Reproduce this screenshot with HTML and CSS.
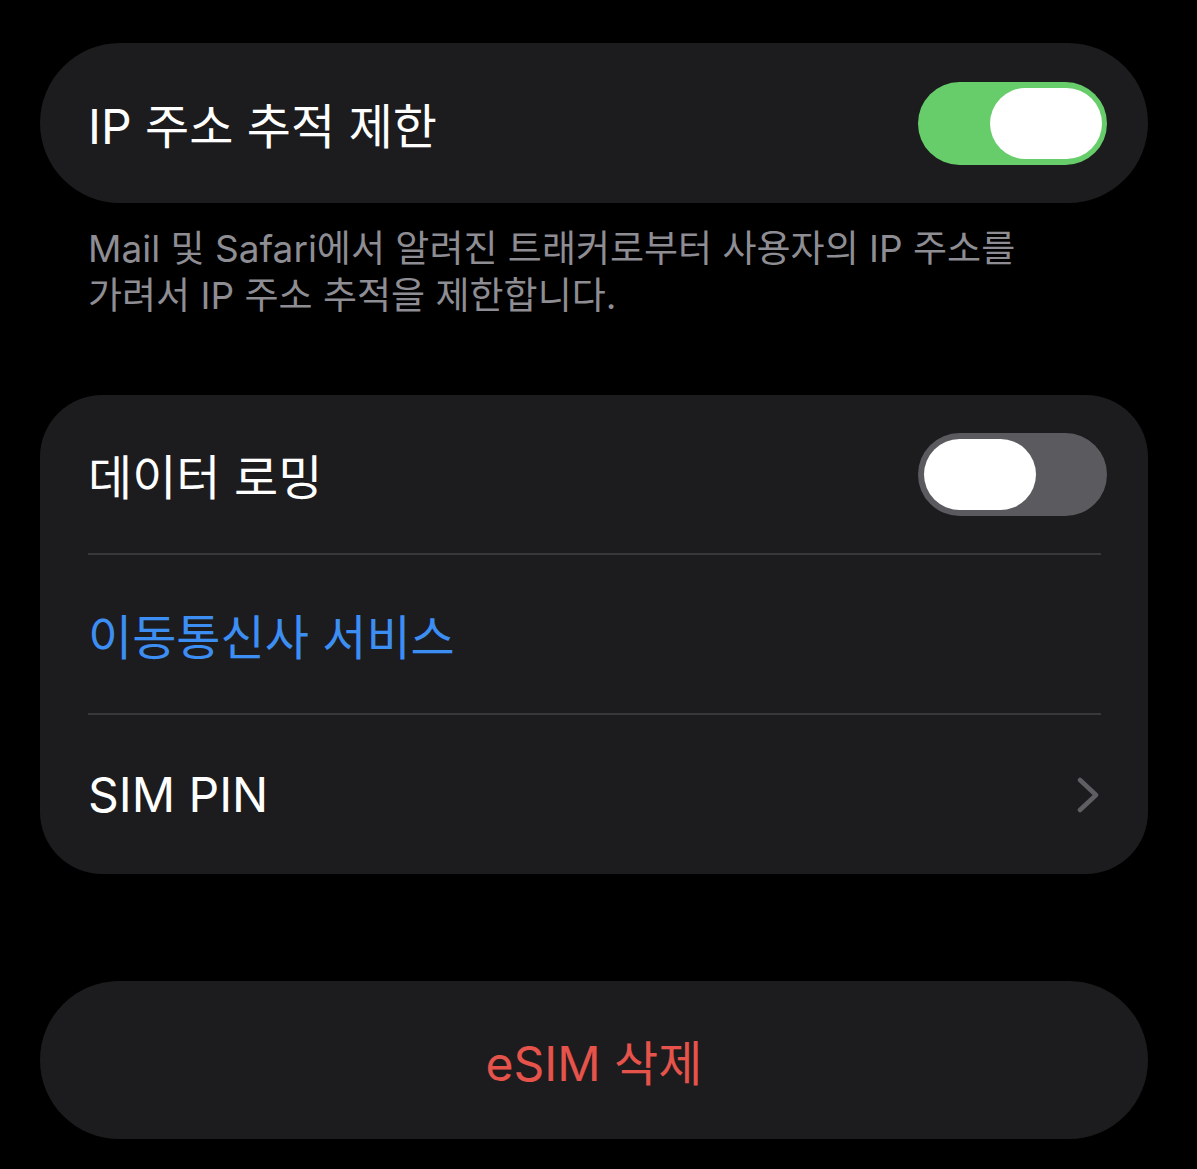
FILE: index.html
```html
<!DOCTYPE html>
<html lang="ko">
<head>
  <meta charset="UTF-8">
  <meta name="viewport" content="width=device-width, initial-scale=1.0">
  <title>셀룰러 설정</title>
  <link rel="stylesheet" href="styles.css">
</head>
<body>

<div class="settings">

  <div class="group pill">
    <div class="row tall">
      <span class="label">IP 주소 추적 제한</span>
      <div class="toggle on"><span class="knob"></span></div>
    </div>
  </div>
  <p class="footer">Mail 및 Safari에서 알려진 트래커로부터 사용자의 IP 주소를<br>가려서 IP 주소 추적을 제한합니다.</p>

  <div class="group">
    <div class="row">
      <span class="label">데이터 로밍</span>
      <div class="toggle"><span class="knob"></span></div>
    </div>
    <div class="divider"></div>
    <div class="row">
      <span class="label link">이동통신사 서비스</span>
    </div>
    <div class="divider"></div>
    <div class="row last">
      <span class="label">SIM PIN</span>
      <svg class="chevron" width="22" height="36" viewBox="0 0 22 36">
        <polyline points="3,3 19,18 3,33" fill="none" stroke="#5e5e63" stroke-width="4.5" stroke-linecap="round" stroke-linejoin="round"/>
      </svg>
    </div>
  </div>

  <div class="group pill danger">
    <div class="row center">
      <span class="label red">eSIM 삭제</span>
    </div>
  </div>

</div>

</body>
</html>
```

FILE: styles.css
```css
body {
  margin: 0;
  background: #000;
  font-family: Inter, "Noto Sans CJK KR", sans-serif;
  color: #fff;
}
.settings {
  padding: 43px 49px 0 40px;
}
.group {
  background: #1c1c1e;
  border-radius: 62px;
}
.pill {
  border-radius: 80px;
}
.row {
  height: 158px;
  display: flex;
  align-items: center;
  justify-content: space-between;
  padding: 0 41px 0 48px;
}
.row.tall {
  height: 160px;
}
.row.last {
  height: 159px;
}
.row.center {
  justify-content: center;
  padding: 0;
}
.label {
  font-size: 48px;
}
.link {
  color: #3d8ef3;
}
.red {
  color: #e5534b;
}
.divider {
  height: 2px;
  background: #38383b;
  margin: 0 47px 0 48px;
}
.footer {
  margin: 22px 0 76px 48px;
  font-size: 37px;
  line-height: 47px;
  color: #8d8d93;
}
.danger {
  margin-top: 107px;
}
.toggle {
  width: 189px;
  height: 83px;
  box-sizing: border-box;
  padding: 6px;
  border-radius: 42px;
  background: #5b5a5f;
  display: flex;
}
.toggle.on {
  background: #67cd6a;
  justify-content: flex-end;
  padding-right: 5px;
}
.knob {
  width: 112px;
  height: 71px;
  border-radius: 36px;
  background: #fff;
}
.chevron {
  margin-right: 8px;
}
```
